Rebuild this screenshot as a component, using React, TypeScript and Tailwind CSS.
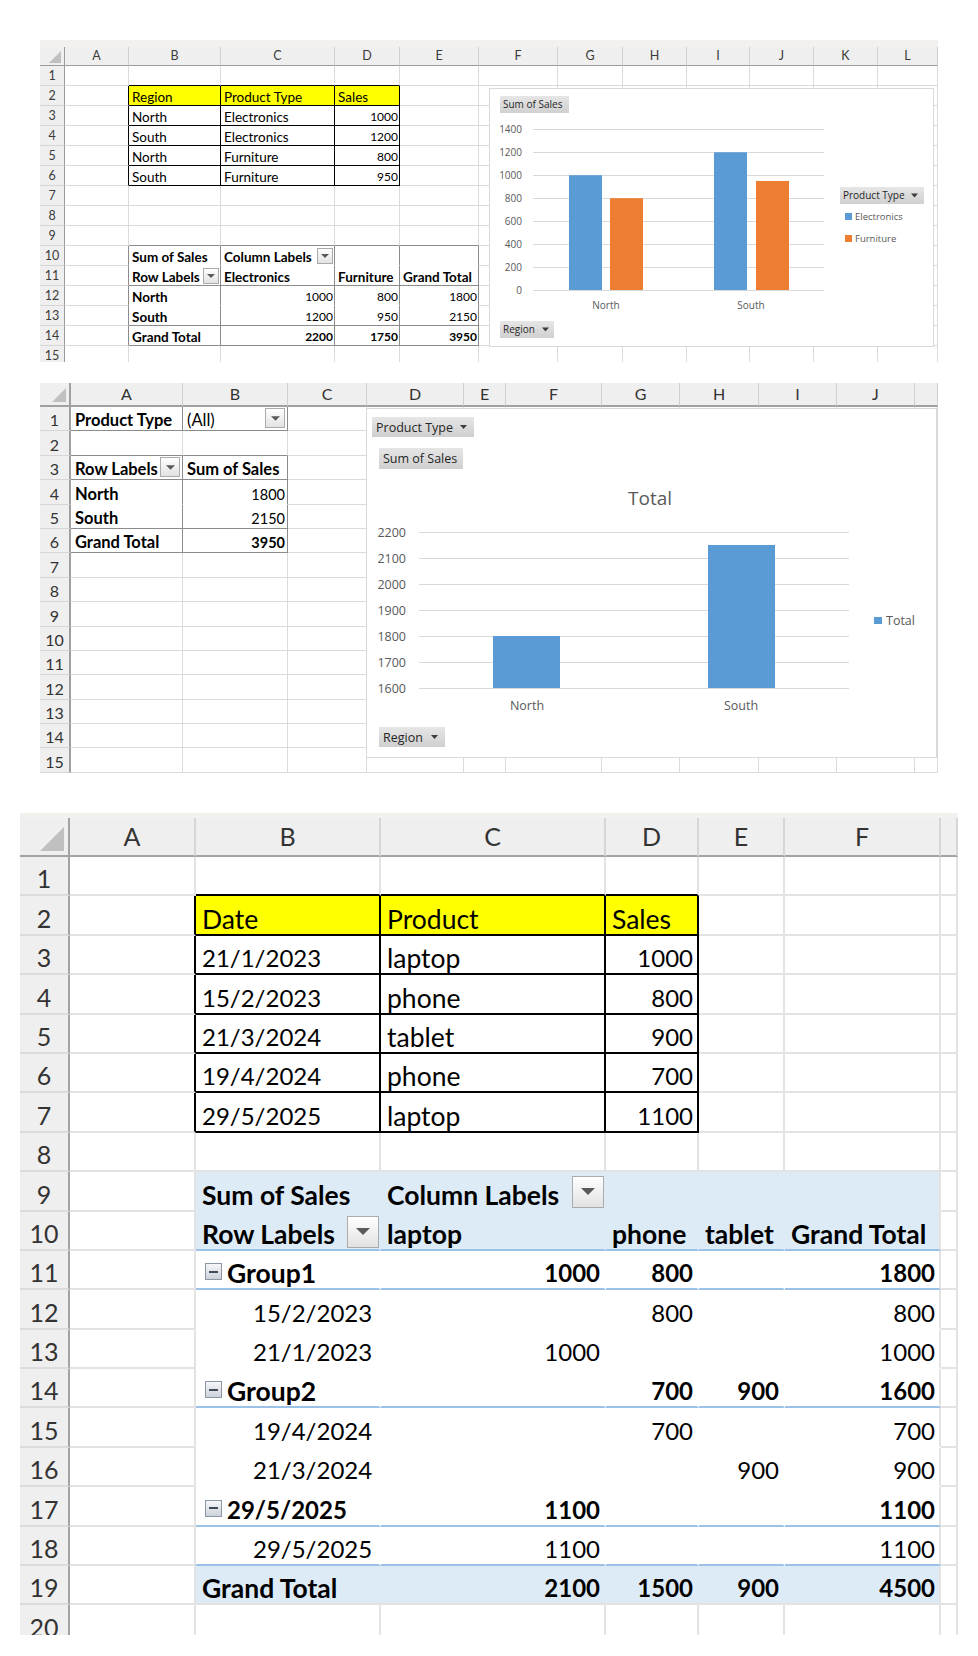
import React from 'react';

type E = 'g' | 'k' | 's' | 'b' | 'n';
type Cell = { t: React.ReactNode; r?: boolean; b?: boolean; bg?: string; n?: boolean };

interface Cfg {
  gridCls: string;
  letters: string[];
  nRows: number;
  cornerCls: string;
  corner: React.ReactNode;
  hdrCls: string;
  rowHdrCls: string;
  cellBase: string;
  txtCls: string;
  numCls: string;
  R: Record<E, string>;
  B: Record<E, string>;
  rE: (r: number, c: number) => E;
  bE: (r: number, c: number) => E;
  cell: (r: number, c: number) => Cell | undefined;
}

const R1: Record<E, string> = {
  g: 'border-r border-r-[#dadada]',
  k: 'border-r border-r-black',
  s: 'border-r border-r-[#8c8c8c]',
  b: 'border-r border-r-[#9bc2e6]',
  n: 'border-r border-r-transparent',
};
const B1: Record<E, string> = {
  g: 'border-b border-b-[#dadada]',
  k: 'border-b border-b-black',
  s: 'border-b border-b-[#8c8c8c]',
  b: 'border-b border-b-[#9bc2e6]',
  n: 'border-b border-b-transparent',
};
const R3: Record<E, string> = {
  g: 'border-r-2 border-r-[#e3e3e3]',
  k: 'border-r-2 border-r-black',
  s: 'border-r-2 border-r-[#8c8c8c]',
  b: 'border-r-2 border-r-[#9bc2e6]',
  n: 'border-r-2 border-r-transparent',
};
const B3: Record<E, string> = {
  g: 'border-b-2 border-b-[#e3e3e3]',
  k: 'border-b-2 border-b-black',
  s: 'border-b-2 border-b-[#8c8c8c]',
  b: 'border-b-2 border-b-[#9bc2e6]',
  n: 'border-b-2 border-b-transparent',
};

function DD({ s, m }: { s: 1 | 2 | 3; m?: string }) {
  const box = s === 1 ? 'w-[16px] h-[16px]' : s === 2 ? 'w-[20px] h-[20px]' : 'w-[32px] h-[32px]';
  const tri = s === 3 ? 'w-[14px] h-[7px]' : s === 2 ? 'w-[9px] h-[5px]' : 'w-[8px] h-[4px]';
  return (
    <span
      className={`ml-auto shrink-0 flex items-center justify-center border border-[#ababab] bg-linear-to-b from-white to-[#e2e2e2] ${box} ${m ?? ''}`}
    >
      <svg viewBox="0 0 8 4" className={tri}>
        <polygon points="0,0 8,0 4,4" fill="#5a5a5a" />
      </svg>
    </span>
  );
}

function Minus() {
  return (
    <span className="ml-[3px] mr-[5px] mb-[7px] shrink-0 w-[17px] h-[17px] border border-[#8c97a6] bg-linear-to-b from-[#f6f7f9] to-[#cdd2da] flex items-center justify-center">
      <span className="w-[9px] h-[2px] bg-[#404a58]" />
    </span>
  );
}

function Corner({ cls }: { cls: string }) {
  return (
    <svg viewBox="0 0 10 10" className={`absolute ${cls}`}>
      <polygon points="10,0 10,10 0,10" fill="#c0c0c0" />
    </svg>
  );
}

function Sheet({ cfg }: { cfg: Cfg }) {
  const out: React.ReactNode[] = [];
  out.push(
    <div key="corner" className={cfg.cornerCls}>
      {cfg.corner}
    </div>
  );
  cfg.letters.forEach((l, i) =>
    out.push(
      <div key={'h' + i} className={cfg.hdrCls}>
        {l}
      </div>
    )
  );
  for (let r = 1; r <= cfg.nRows; r++) {
    out.push(
      <div key={'r' + r} className={cfg.rowHdrCls}>
        {r}
      </div>
    );
    for (let c = 0; c < cfg.letters.length; c++) {
      const d = cfg.cell(r, c);
      const cls = [
        cfg.cellBase,
        d?.r || d?.n ? cfg.numCls : cfg.txtCls,
        cfg.R[cfg.rE(r, c)],
        cfg.B[cfg.bE(r, c)],
        d?.bg ?? 'bg-white',
        d?.r ? 'justify-end' : 'justify-start',
        d?.b ? 'font-bold' : 'font-normal',
      ].join(' ');
      out.push(
        <div key={r + '-' + c} className={cls}>
          {d?.t}
        </div>
      );
    }
  }
  return <div className={cfg.gridCls}>{out}</div>;
}

/* ---------------- Sheet 1 ---------------- */
const YEL = 'bg-[#ffff00]';
const s1Data: Record<string, Cell> = {
  '2,1': { t: 'Region', bg: YEL },
  '2,2': { t: 'Product Type', bg: YEL },
  '2,3': { t: 'Sales', bg: YEL },
  '3,1': { t: 'North' }, '3,2': { t: 'Electronics' }, '3,3': { t: '1000', r: true },
  '4,1': { t: 'South' }, '4,2': { t: 'Electronics' }, '4,3': { t: '1200', r: true },
  '5,1': { t: 'North' }, '5,2': { t: 'Furniture' }, '5,3': { t: '800', r: true },
  '6,1': { t: 'South' }, '6,2': { t: 'Furniture' }, '6,3': { t: '950', r: true },
  '10,1': { t: 'Sum of Sales', b: true },
  '10,2': { t: <><span>Column Labels</span><DD s={1} /></>, b: true },
  '11,1': { t: <><span>Row Labels</span><DD s={1} /></>, b: true },
  '11,2': { t: 'Electronics', b: true },
  '11,3': { t: 'Furniture', b: true },
  '11,4': { t: 'Grand Total', b: true },
  '12,1': { t: 'North', b: true }, '12,2': { t: '1000', r: true }, '12,3': { t: '800', r: true }, '12,4': { t: '1800', r: true },
  '13,1': { t: 'South', b: true }, '13,2': { t: '1200', r: true }, '13,3': { t: '950', r: true }, '13,4': { t: '2150', r: true },
  '14,1': { t: 'Grand Total', b: true }, '14,2': { t: '2200', r: true, b: true }, '14,3': { t: '1750', r: true, b: true }, '14,4': { t: '3950', r: true, b: true },
};

const sheet1: Cfg = {
  gridCls:
    "grid grid-cols-[25px_64px_92px_114px_65px_79px_79px_65px_64px_63px_64px_64px_60px] grid-rows-[19px] auto-rows-[20px] font-[Lato,sans-serif]",
  letters: ['A', 'B', 'C', 'D', 'E', 'F', 'G', 'H', 'I', 'J', 'K', 'L'],
  nRows: 15,
  cornerCls: 'relative bg-[#efefef] border-r border-r-[#9c9c9c] border-b border-b-[#9c9c9c]',
  corner: <Corner cls="right-[3px] bottom-[2px] w-[12px] h-[12px]" />,
  hdrCls:
    'bg-[#efefef] border-r border-r-[#d0d0d0] border-b border-b-[#9c9c9c] flex items-center justify-center text-[12.5px] text-[#3b3b3b]',
  rowHdrCls:
    'bg-[#efefef] border-r border-r-[#9c9c9c] border-b border-b-[#d6d6d6] flex items-end justify-center pb-[2px] text-[12.5px] leading-[14px] text-[#3b3b3b]',
  cellBase: 'flex items-end pl-[3px] pr-[1px] pb-[1px] leading-[14px] whitespace-nowrap text-black',
  txtCls: 'text-[13.5px]',
  numCls: 'text-[12px]',
  R: R1,
  B: B1,
  rE: (r, c) => {
    if (r >= 2 && r <= 6 && c >= 0 && c <= 3) return 'k';
    if (r >= 10 && r <= 14 && c >= 0 && c <= 4) return 's';
    return 'g';
  },
  bE: (r, c) => {
    if (c >= 1 && c <= 3 && r >= 1 && r <= 6) return 'k';
    if (c >= 1 && c <= 4 && [9, 11, 13, 14].includes(r)) return 's';
    if (c >= 1 && c <= 4 && r >= 10 && r <= 14) return 'n';
    return 'g';
  },
  cell: (r, c) => s1Data[r + ',' + c],
};

/* ---------------- Sheet 2 ---------------- */
const s2Data: Record<string, Cell> = {
  '1,0': { t: 'Product Type', b: true },
  '1,1': { t: <><span>(All)</span><DD s={2} m="mb-[1px]" /></> },
  '3,0': { t: <><span>Row Labels</span><DD s={2} m="mb-[1px]" /></>, b: true },
  '3,1': { t: 'Sum of Sales', b: true },
  '4,0': { t: 'North', b: true }, '4,1': { t: '1800', r: true },
  '5,0': { t: 'South', b: true }, '5,1': { t: '2150', r: true },
  '6,0': { t: 'Grand Total', b: true }, '6,1': { t: '3950', r: true, b: true },
};

const sheet2: Cfg = {
  gridCls:
    'grid grid-cols-[31px_112px_105px_79px_97px_42px_96px_78px_79px_78px_78px_23px] grid-rows-[24px] auto-rows-[24.4px] font-[Lato,sans-serif]',
  letters: ['A', 'B', 'C', 'D', 'E', 'F', 'G', 'H', 'I', 'J', ''],
  nRows: 15,
  cornerCls: 'relative bg-[#efefef] border-r-2 border-r-[#a0a0a0] border-b-2 border-b-[#a0a0a0]',
  corner: <Corner cls="right-[3px] bottom-[3px] w-[14px] h-[14px]" />,
  hdrCls:
    'bg-[#efefef] border-r border-r-[#d0d0d0] border-b-2 border-b-[#a0a0a0] flex items-center justify-center text-[16px] text-[#333333]',
  rowHdrCls:
    'bg-[#efefef] border-r-2 border-r-[#a0a0a0] border-b border-b-[#d6d6d6] flex items-end justify-center pb-[2px] text-[16px] leading-[17px] text-[#333333]',
  cellBase: 'flex items-end pl-[4px] pr-[2px] pb-[1px] leading-[17px] whitespace-nowrap text-black',
  txtCls: 'text-[16.5px]',
  numCls: 'text-[14.5px]',
  R: R1,
  B: B1,
  rE: (r, c) => {
    if ((r === 1 || (r >= 3 && r <= 6)) && (c === 0 || c === 1)) return 's';
    return 'g';
  },
  bE: (r, c) => {
    if ((c === 0 || c === 1) && [1, 2, 3, 5, 6].includes(r)) return 's';
    if ((c === 0 || c === 1) && r === 4) return 'n';
    return 'g';
  },
  cell: (r, c) => s2Data[r + ',' + c],
};

/* ---------------- Sheet 3 ---------------- */
const BLUE = 'bg-[#ddebf7]';
const grp = (s: string) => (
  <>
    <Minus />
    <span>{s}</span>
  </>
);
const sub = (s: string) => <span className="ml-[51px]">{s}</span>;

const s3Data: Record<string, Cell> = {
  '2,1': { t: 'Date', bg: YEL },
  '2,2': { t: 'Product', bg: YEL },
  '2,3': { t: 'Sales', bg: YEL },
  '3,1': { t: '21/1/2023', n: true }, '3,2': { t: 'laptop' }, '3,3': { t: '1000', r: true },
  '4,1': { t: '15/2/2023', n: true }, '4,2': { t: 'phone' }, '4,3': { t: '800', r: true },
  '5,1': { t: '21/3/2024', n: true }, '5,2': { t: 'tablet' }, '5,3': { t: '900', r: true },
  '6,1': { t: '19/4/2024', n: true }, '6,2': { t: 'phone' }, '6,3': { t: '700', r: true },
  '7,1': { t: '29/5/2025', n: true }, '7,2': { t: 'laptop' }, '7,3': { t: '1100', r: true },
  '9,1': { t: 'Sum of Sales', b: true, bg: BLUE },
  '9,2': { t: <><span>Column Labels</span><DD s={3} m="-mr-[4px] mb-[1px]" /></>, b: true, bg: BLUE },
  '9,3': { t: '', bg: BLUE }, '9,4': { t: '', bg: BLUE }, '9,5': { t: '', bg: BLUE },
  '10,1': { t: <><span>Row Labels</span><DD s={3} m="-mr-[4px]" /></>, b: true, bg: BLUE },
  '10,2': { t: 'laptop', b: true, bg: BLUE },
  '10,3': { t: 'phone', b: true, bg: BLUE },
  '10,4': { t: 'tablet', b: true, bg: BLUE },
  '10,5': { t: 'Grand Total', b: true, bg: BLUE },
  '11,1': { t: grp('Group1'), b: true },
  '11,2': { t: '1000', r: true, b: true }, '11,3': { t: '800', r: true, b: true }, '11,5': { t: '1800', r: true, b: true },
  '12,1': { t: sub('15/2/2023'), n: true }, '12,3': { t: '800', r: true }, '12,5': { t: '800', r: true },
  '13,1': { t: sub('21/1/2023'), n: true }, '13,2': { t: '1000', r: true }, '13,5': { t: '1000', r: true },
  '14,1': { t: grp('Group2'), b: true },
  '14,3': { t: '700', r: true, b: true }, '14,4': { t: '900', r: true, b: true }, '14,5': { t: '1600', r: true, b: true },
  '15,1': { t: sub('19/4/2024'), n: true }, '15,3': { t: '700', r: true }, '15,5': { t: '700', r: true },
  '16,1': { t: sub('21/3/2024'), n: true }, '16,4': { t: '900', r: true }, '16,5': { t: '900', r: true },
  '17,1': { t: grp('29/5/2025'), b: true, n: true },
  '17,2': { t: '1100', r: true, b: true }, '17,5': { t: '1100', r: true, b: true },
  '18,1': { t: sub('29/5/2025'), n: true }, '18,2': { t: '1100', r: true }, '18,5': { t: '1100', r: true },
  '19,1': { t: 'Grand Total', b: true, bg: BLUE },
  '19,2': { t: '2100', r: true, b: true, bg: BLUE },
  '19,3': { t: '1500', r: true, b: true, bg: BLUE },
  '19,4': { t: '900', r: true, b: true, bg: BLUE },
  '19,5': { t: '4500', r: true, b: true, bg: BLUE },
};

const sheet3: Cfg = {
  gridCls:
    'grid grid-cols-[50px_126px_185px_225px_93px_86px_156px_17px] grid-rows-[39px] auto-rows-[39.4px] font-[Lato,sans-serif]',
  letters: ['A', 'B', 'C', 'D', 'E', 'F', ''],
  nRows: 20,
  cornerCls: 'relative bg-[#efefef] border-r-2 border-r-[#a3a3a3] border-b-2 border-b-[#a3a3a3]',
  corner: <Corner cls="right-[4px] bottom-[4px] w-[24px] h-[24px]" />,
  hdrCls:
    'bg-[#efefef] border-r-2 border-r-[#d6d6d6] border-b-2 border-b-[#a3a3a3] flex items-center justify-center text-[25px] text-[#333333]',
  rowHdrCls:
    'bg-[#efefef] border-r-2 border-r-[#a3a3a3] border-b-2 border-b-[#dcdcdc] flex items-end justify-center pb-[2px] text-[25px] leading-[28px] text-[#333333]',
  cellBase: 'flex items-end pl-[6px] pr-[4px] pb-[1px] leading-[28px] whitespace-nowrap text-black',
  txtCls: 'text-[26.5px]',
  numCls: 'text-[24px]',
  R: R3,
  B: B3,
  rE: (r, c) => {
    if (r >= 2 && r <= 7 && c >= 0 && c <= 3) return 'k';
    if (r >= 9 && r <= 19 && c >= 1 && c <= 4) return 'n';
    return 'g';
  },
  bE: (r, c) => {
    if (c >= 1 && c <= 3 && r >= 1 && r <= 7) return 'k';
    if (c >= 1 && c <= 5 && [10, 11, 14, 17, 18].includes(r)) return 'b';
    if (c >= 1 && c <= 5 && r >= 9 && r <= 18) return 'n';
    return 'g';
  },
  cell: (r, c) => s3Data[r + ',' + c],
};

/* ---------------- Charts ---------------- */
function SvgBtn({
  x, y, w, h, label, fs, tx, arrow, grad,
}: {
  x: number; y: number; w: number; h: number; label: string; fs: number; tx: number; arrow?: number; grad: string;
}) {
  const cy = y + h / 2;
  return (
    <g>
      <rect x={x} y={y} width={w} height={h} fill={`url(#${grad})`} />
      <text x={x + tx} y={cy + fs * 0.36} fontSize={fs} fill="#262626">
        {label}
      </text>
      {arrow !== undefined && (
        <polygon
          points={`${x + w - arrow},${cy - 2} ${x + w - arrow + 7},${cy - 2} ${x + w - arrow + 3.5},${cy + 2}`}
          fill="#3c3c3c"
        />
      )}
    </g>
  );
}

function Chart1() {
  const top = 41.3;
  const bot = 202;
  const sy = (v: number) => bot - (v / 1400) * (bot - top);
  const ticks = [1400, 1200, 1000, 800, 600, 400, 200, 0];
  const bars = [
    { x: 80, v: 1000, c: '#5b9bd5' },
    { x: 121, v: 800, c: '#ed7d31' },
    { x: 225, v: 1200, c: '#5b9bd5' },
    { x: 267, v: 950, c: '#ed7d31' },
  ];
  return (
    <svg width="445" height="259" className="block font-['Open_Sans',sans-serif]">
      <defs>
        <linearGradient id="btnA" x1="0" y1="0" x2="0" y2="1">
          <stop offset="0" stopColor="#e6e6e6" />
          <stop offset="1" stopColor="#d0d0d0" />
        </linearGradient>
      </defs>
      <rect x="0.5" y="0.5" width="444" height="258" fill="white" stroke="#d9d9d9" />
      {ticks.map((v) => {
        const y = Math.round(sy(v)) + 0.5;
        return (
          <g key={v}>
            <line x1="44" x2="335" y1={y} y2={y} stroke="#d9d9d9" strokeWidth="1" />
            <text x="33" y={y + 3.6} textAnchor="end" fontSize="10" fill="#595959">
              {v}
            </text>
          </g>
        );
      })}
      {bars.map((b, i) => (
        <rect key={i} x={b.x} y={sy(b.v)} width="33" height={bot - sy(b.v)} fill={b.c} />
      ))}
      <text x="117" y="221" textAnchor="middle" fontSize="10" fill="#595959">North</text>
      <text x="262" y="221" textAnchor="middle" fontSize="10" fill="#595959">South</text>
      <SvgBtn x={11} y={8} w={69} h={17} label="Sum of Sales" fs={10} tx={3} grad="btnA" />
      <SvgBtn x={11} y={233} w={54} h={17} label="Region" fs={10} tx={3} arrow={12} grad="btnA" />
      <SvgBtn x={351} y={99} w={84} h={17} label="Product Type" fs={10} tx={3} arrow={13} grad="btnA" />
      <rect x="356" y="125" width="7" height="7" fill="#5b9bd5" />
      <text x="366" y="131.5" fontSize="9.5" fill="#595959">Electronics</text>
      <rect x="356" y="147" width="7" height="7" fill="#ed7d31" />
      <text x="366" y="153.5" fontSize="9.5" fill="#595959">Furniture</text>
    </svg>
  );
}

function Chart2() {
  const sy = (v: number) => 280 - (v - 1600) * 0.26;
  const ticks = [2200, 2100, 2000, 1900, 1800, 1700, 1600];
  return (
    <svg width="571" height="350" className="block font-['Open_Sans',sans-serif]">
      <defs>
        <linearGradient id="btnB" x1="0" y1="0" x2="0" y2="1">
          <stop offset="0" stopColor="#e6e6e6" />
          <stop offset="1" stopColor="#cfcfcf" />
        </linearGradient>
      </defs>
      <rect x="0.5" y="0.5" width="570" height="349" fill="white" stroke="#d9d9d9" />
      {ticks.map((v) => {
        const y = Math.round(sy(v)) + 0.5;
        return (
          <g key={v}>
            <line x1="53" x2="483" y1={y} y2={y} stroke="#d9d9d9" strokeWidth="1" />
            <text x="40" y={y + 4.4} textAnchor="end" fontSize="12.5" fill="#595959">
              {v}
            </text>
          </g>
        );
      })}
      <rect x="127" y={sy(1800)} width="67" height={280 - sy(1800)} fill="#5b9bd5" />
      <rect x="342" y={sy(2150)} width="67" height={280 - sy(2150)} fill="#5b9bd5" />
      <text x="161" y="302" textAnchor="middle" fontSize="12.5" fill="#595959">North</text>
      <text x="375" y="302" textAnchor="middle" fontSize="12.5" fill="#595959">South</text>
      <text x="284" y="97" textAnchor="middle" fontSize="19" fill="#595959">Total</text>
      <rect x="508" y="209" width="8" height="7" fill="#5b9bd5" />
      <text x="520" y="216.5" fontSize="12.5" fill="#595959">Total</text>
      <SvgBtn x={6} y={9} w={102} h={20} label="Product Type" fs={12.5} tx={4} arrow={14} grad="btnB" />
      <SvgBtn x={13} y={40} w={84} h={21} label="Sum of Sales" fs={12.5} tx={4} grad="btnB" />
      <SvgBtn x={13} y={319} w={66} h={20} label="Region" fs={12.5} tx={4} arrow={14} grad="btnB" />
    </svg>
  );
}

export default function App() {
  return (
    <div className="w-[978px] h-[1656px] bg-white flex flex-col overflow-hidden">
      <div className="ml-[40px] mt-[40px] w-[898px] h-[322px] overflow-hidden relative flex flex-col">
        <div className="h-[7px] shrink-0 bg-[#f3f1ee]" />
        <Sheet cfg={sheet1} />
        <div className="absolute left-[449px] top-[48px]">
          <Chart1 />
        </div>
      </div>
      <div className="ml-[40px] mt-[21px] w-[898px] h-[390px] overflow-hidden relative">
        <Sheet cfg={sheet2} />
        <div className="absolute left-[326px] top-[25px]">
          <Chart2 />
        </div>
      </div>
      <div className="ml-[20px] mt-[40px] w-[938px] h-[822px] overflow-hidden relative flex flex-col">
        <div className="h-[5px] shrink-0 bg-[#f3f1ee]" />
        <Sheet cfg={sheet3} />
      </div>
    </div>
  );
}
